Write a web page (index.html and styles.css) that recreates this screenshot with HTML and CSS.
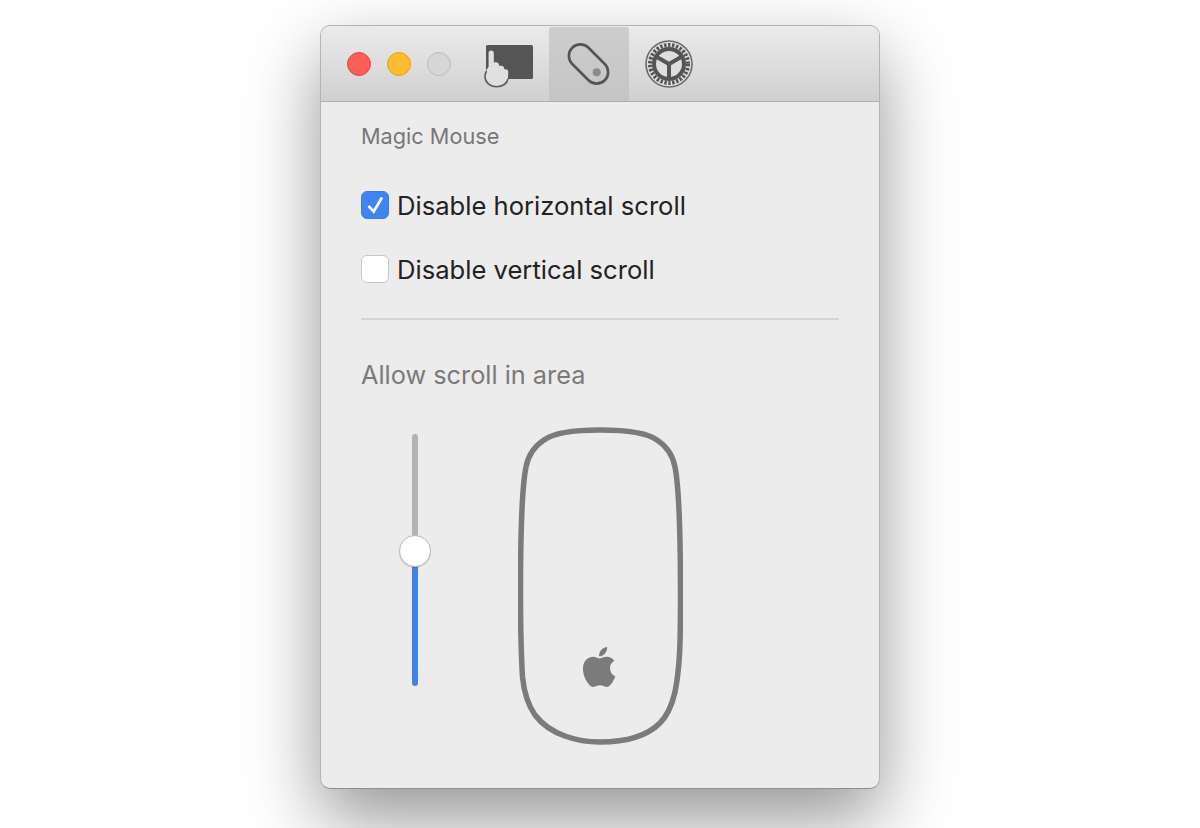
FILE: index.html
```html
<!DOCTYPE html>
<html lang="en">
<head>
<meta charset="utf-8">
<title>Magic Mouse</title>
<link rel="stylesheet" href="styles.css">
</head>
<body>
<main class="window">
  <header class="titlebar">
    <div class="lights">
      <span class="light red"></span>
      <span class="light yellow"></span>
      <span class="light grey"></span>
    </div>
    <nav class="tabs">
      <div class="tab">
        <svg class="icon" width="60" height="50" viewBox="479 39 60 50">
          <rect x="486" y="45" width="47" height="34" rx="1.5" fill="#555"/>
          <path d="M491 50.5C492.800 50.5 493.800 51.400 493.800 53L493.800 62.500C495.400 62.200 497.400 62.400 498.300 63.300C499 64 499.200 65 499.200 66C500.800 65.600 502.600 65.700 503.300 66.400C504 67.200 504.300 68.200 504.300 69.300C505.600 69.200 507.200 69.400 507.900 70.400C508.600 72 508.100 75.400 507.900 78.300C507.200 83.400 502.600 86.700 496.700 86.700C490 86.700 485.200 82.600 485 76.700C484.900 72.800 486 70 488.600 66.700L488.600 53C488.600 51.400 489.400 50.500 491 50.500Z" fill="#e0e0e0"/>
          <path d="M486.500 71C485.400 73 484.900 74.700 485 76.700C485.200 82.600 490 86.700 496.700 86.700C502.600 86.700 507.200 83.400 507.900 79" fill="none" stroke="#5e5e5e" stroke-width="1.600"/>
        </svg>
      </div>
      <div class="tab active">
        <svg class="icon" width="60" height="50" viewBox="559 39 60 50">
          <rect x="565.500" y="52.500" width="46" height="23" rx="11.500" transform="rotate(45 588.500 64)" fill="none" stroke="#555" stroke-width="2.600"/>
          <circle cx="596.700" cy="72.300" r="4" fill="#8b8b8b"/>
        </svg>
      </div>
      <div class="tab">
        <svg class="icon" width="60" height="50" viewBox="639 39 60 50">
          <circle cx="669" cy="64" r="23" fill="#dedede" stroke="#6a6a6a" stroke-width="1.600"/>
          <circle cx="669" cy="64" r="19" fill="none" stroke="#555" stroke-width="4" stroke-dasharray="2.400 1.600"/>
          <circle cx="669" cy="64" r="15" fill="#dedede" stroke="#555" stroke-width="4"/>
          <path d="M669 64L656 56.500M669 64L682 56.500M669 64L669 79" fill="none" stroke="#555" stroke-width="4"/>
        </svg>
      </div>
    </nav>
  </header>
  <section class="content">
    <h2 class="small-title">Magic Mouse</h2>
    <div class="option">
      <span class="check on">
        <svg width="18" height="18" viewBox="0 0 18 18"><path d="M2.500 10L7.700 15.500L16 1.500" fill="none" stroke="#fff" stroke-width="2.600"/></svg>
      </span>
      <span class="label">Disable horizontal scroll</span>
    </div>
    <div class="option second">
      <span class="check"></span>
      <span class="label">Disable vertical scroll</span>
    </div>
    <hr class="divider">
    <h2 class="area-title">Allow scroll in area</h2>
    <div class="area">
      <div class="slider">
        <div class="track-top"></div>
        <div class="track-bottom"></div>
        <span class="thumb"></span>
      </div>
      <svg class="mouse" width="165" height="318" viewBox="0 0 165 318">
        <path d="M82 3C108 3 128 5 139 13C150 20 155 30 157 40C161 60 162.500 110 162.500 170C162.500 215 162 240 157 265C153 282 148 290 142 296C128 310 105 315 82 315C60 315 32 308 17 288C10 278 6 265 4.500 250C3 225 2.500 200 2.500 165C2.500 110 4 60 8 40C10 30 15 20 26 13C37 5 57 3 82 3Z" fill="none" stroke="#7b7b7b" stroke-width="5.500"/>
        <path transform="translate(57.200 216) scale(2)" fill="#7b7b7b" d="M18.71 19.5c-.83 1.24-1.71 2.45-3.05 2.47-1.34.03-1.77-.79-3.29-.79-1.53 0-2 .77-3.27.82-1.31.05-2.3-1.32-3.14-2.53C4.25 17 2.94 12.45 4.7 9.39c.87-1.52 2.43-2.48 4.12-2.51 1.28-.02 2.5.87 3.29.87.78 0 2.26-1.07 3.81-.91.65.03 2.47.26 3.64 1.98-.09.06-2.17 1.28-2.15 3.81.03 3.02 2.65 4.03 2.68 4.04-.03.07-.42 1.44-1.38 2.83M13 3.5c.73-.83 1.94-1.46 2.94-1.5.13 1.17-.34 2.35-1.04 3.19-.69.85-1.83 1.51-2.95 1.42-.15-1.15.41-2.35 1.05-3.11z"/>
      </svg>
    </div>
  </section>
</main>
</body>
</html>
```
FILE: styles.css
```css
html, body {
  margin: 0;
  padding: 0;
  height: 100%;
  background: #fff;
  overflow: hidden;
}

body {
  display: flex;
  justify-content: center;
  align-items: flex-start;
  padding-top: 25px;
  box-sizing: border-box;
  font-family: Inter, "Liberation Sans", sans-serif;
}

.window {
  width: 560px;
  height: 764px;
  box-sizing: border-box;
  border: 1px solid #b4b4b4;
  border-bottom-color: #8f8f8f;
  border-radius: 10px;
  background: #ececec;
  box-shadow: 0 30px 72px rgba(0, 0, 0, 0.42);
}

.titlebar {
  display: flex;
  align-items: stretch;
  height: 76px;
  box-sizing: border-box;
  padding: 1px 0 0 26px;
  border-bottom: 1px solid #aeaeae;
  border-radius: 9px 9px 0 0;
  background: linear-gradient(#ebebeb, #d0d0d0);
}

.lights {
  display: flex;
  align-items: center;
  gap: 16px;
}

.light {
  width: 24px;
  height: 24px;
  box-sizing: border-box;
  border-radius: 50%;
  border: 1px solid transparent;
}

.red { background: #ff5e58; border-color: #e0483f; }
.yellow { background: #febb2c; border-color: #e0a12a; }
.grey { background: #d6d6d6; border-color: #bcbcbc; }

.tabs {
  display: flex;
  margin-left: 18px;
}

.tab {
  width: 80px;
  display: flex;
  align-items: center;
  justify-content: center;
  border-radius: 3px 3px 0 0;
}

.tab.active {
  background: linear-gradient(#cdcdcd, #c5c5c5);
}

.icon {
  display: block;
  filter: blur(0.4px);
}

.content {
  padding: 0 40px;
}

.small-title {
  margin: 0;
  padding-top: 20px;
  font-size: 21.7px;
  line-height: 28px;
  font-weight: 400;
  color: #777;
}

.option {
  display: flex;
  align-items: center;
  height: 28px;
  margin-top: 41px;
}

.option.second {
  margin-top: 36px;
}

.check {
  width: 28px;
  height: 28px;
  box-sizing: border-box;
  display: flex;
  align-items: center;
  justify-content: center;
  border: 1px solid #c6c6c6;
  border-radius: 6px;
  background: #fff;
}

.check.on {
  border-color: #3c7ee0;
  background: #3f84f2;
}

.label {
  margin-left: 8px;
  margin-top: 2px;
  font-size: 25.6px;
  line-height: 28px;
  color: #222;
}

.divider {
  height: 2px;
  margin: 35px 0 0;
  border: 0;
  background: #d5d5d5;
}

.area-title {
  margin: 40px 0 0;
  font-size: 25.3px;
  line-height: 30px;
  font-weight: 400;
  color: #7a7a7a;
}

.area {
  display: flex;
  align-items: flex-start;
  margin-top: 37px;
  padding-left: 38px;
  gap: 87px;
}

.slider {
  position: relative;
  display: flex;
  flex-direction: column;
  align-items: center;
  width: 32px;
  height: 252px;
  margin-top: 7px;
}

.track-top {
  width: 6px;
  height: 117px;
  border-radius: 3px 3px 0 0;
  background: #b3b3b3;
}

.track-bottom {
  width: 6px;
  height: 135px;
  border-radius: 0 0 3px 3px;
  background: #3f83e6;
}

.thumb {
  position: absolute;
  left: 0;
  top: 101px;
  width: 32px;
  height: 32px;
  box-sizing: border-box;
  border: 1px solid #bdbdbd;
  border-radius: 50%;
  background: #fff;
  box-shadow: 0 1px 1px rgba(0, 0, 0, 0.15);
}

.mouse {
  display: block;
  filter: blur(0.4px);
}
```
